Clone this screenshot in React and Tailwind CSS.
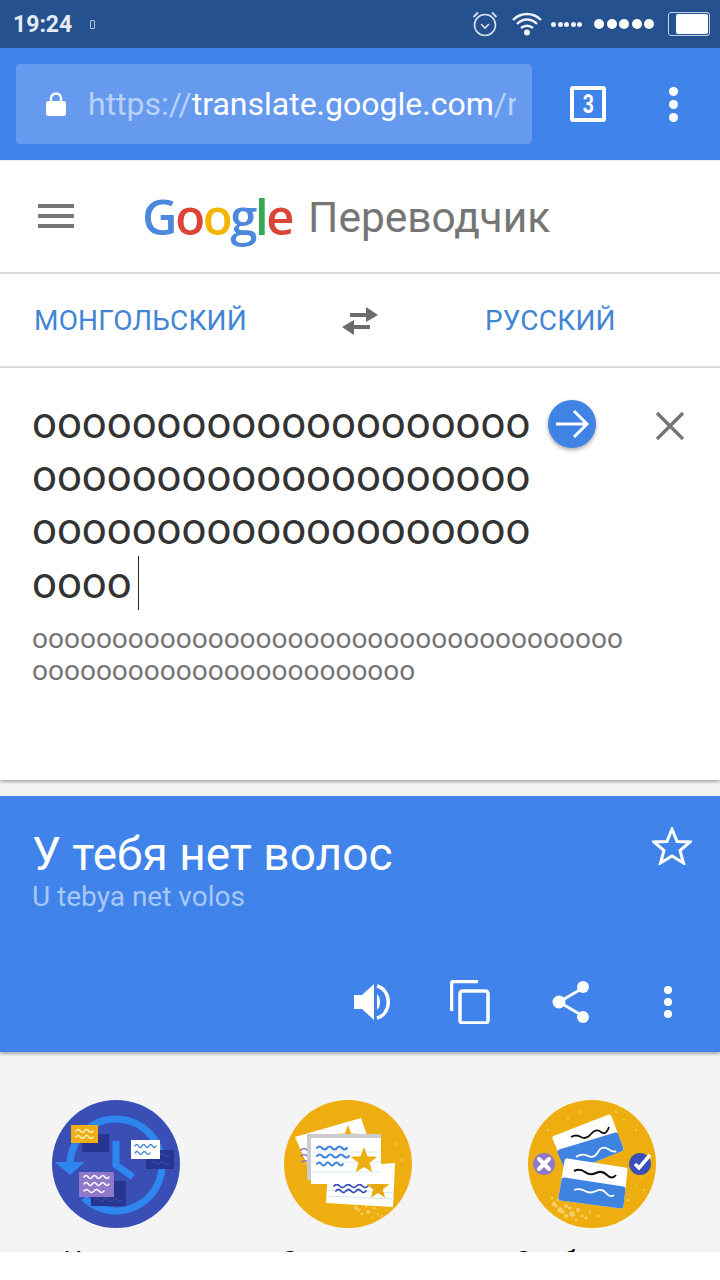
import React from "react";

const Squig = ({ x, y, w, c, sw = 2, n = 3 }) => {
  const s = w / n;
  let d = `M${x} ${y}`;
  for (let i = 0; i < n; i++) d += ` q${s / 4} -3 ${s / 2} 0 t${s / 2} 0`;
  return <path d={d} fill="none" stroke={c} strokeWidth={sw} strokeLinecap="round" />;
};

const Star = ({ cx, cy, r, fill }) => {
  const pts = [];
  for (let i = 0; i < 10; i++) {
    const rad = i % 2 ? r * 0.42 : r;
    const a = -Math.PI / 2 + (i * Math.PI) / 5;
    pts.push(`${(cx + rad * Math.cos(a)).toFixed(1)},${(cy + rad * Math.sin(a)).toFixed(1)}`);
  }
  return <polygon points={pts.join(" ")} fill={fill} />;
};

const Specks = ({ items, c = "#f6cf6a" }) => (
  <g fill={c}>
    {items.map(([x, y, r], i) => (
      <circle key={i} cx={x} cy={y} r={r} />
    ))}
  </g>
);

const bottomSpecks = [
  [26, 104, 2.4], [32, 110, 2.8], [38, 106, 2], [44, 114, 2.8], [50, 110, 2], [38, 116, 2], [58, 118, 1.6], [30, 100, 1.2],
  [24, 98, 1.2], [48, 120, 1.2], [62, 112, 1.2], [70, 116, 1.2], [100, 100, 1.2], [108, 86, 0.8], [114, 78, 0.8],
  [35, 112, 2], [42, 108, 1.8], [54, 116, 1.6], [28, 106, 1.6],
];

const IlluHistory = () => (
  <svg width="128" height="128" viewBox="0 0 128 128" className="block">
    <circle cx="64" cy="64" r="64" fill="#3a4fb5" />
    <path d="M18 64 A46 46 0 1 1 32 98" fill="none" stroke="#2f86ee" strokeWidth="7" />
    <polygon points="3,62 33,62 18,75" fill="#2f86ee" />
    <path d="M64 41 V65 L81 77" fill="none" stroke="#2f86ee" strokeWidth="7" />
    <rect x="30" y="34" width="27" height="18" fill="#26358f" />
    <rect x="19" y="25" width="27" height="18" fill="#f0ae14" />
    <Squig x={24} y={31} w={17} c="#fff3c8" sw={1.4} n={2} />
    <Squig x={24} y={37} w={17} c="#fff3c8" sw={1.4} n={2} />
    <rect x="94" y="50" width="28" height="19" fill="#26358f" />
    <Squig x={99} y={55} w={18} c="#3a4fb5" sw={1.2} n={2} />
    <Squig x={99} y={63} w={18} c="#3a4fb5" sw={1.2} n={2} />
    <rect x="79" y="40" width="29" height="19" fill="#ffffff" />
    <Squig x={83} y={46} w={21} c="#3f83d8" sw={1.4} n={3} />
    <Squig x={83} y={53} w={15} c="#3f83d8" sw={1.4} n={2} />
    <rect x="39" y="81" width="35" height="25" fill="#26358f" />
    <Squig x={43} y={100} w={27} c="#3a4fb5" sw={1.2} n={3} />
    <rect x="27" y="72" width="35" height="25" fill="#9079cb" />
    <Squig x={32} y={77} w={25} c="#ffffff" sw={1.5} n={3} />
    <Squig x={32} y={84} w={25} c="#ffffff" sw={1.5} n={3} />
    <Squig x={32} y={91} w={20} c="#ffffff" sw={1.5} n={2} />
  </svg>
);

const IlluSaved = () => (
  <svg width="128" height="128" viewBox="0 0 128 128" className="block">
    <circle cx="64" cy="64" r="64" fill="#efae0f" />
    <Specks items={[...bottomSpecks.map(([x, y, r]) => [x + 40, y - 2, r * 0.7]), [118, 60, 1], [112, 44, 1]]} />
    <polygon points="11,37 77,18 95,70 28,76" fill="#ffffff" />
    <Star cx={64} cy={38} r={13} fill="#efae0f" />
    <Squig x={17} y={50} w={12} c="#8a6cc8" sw={1.6} n={1} />
    <Squig x={17} y={56} w={12} c="#8a6cc8" sw={1.6} n={1} />
    <Squig x={18} y={62} w={11} c="#8a6cc8" sw={1.6} n={1} />
    <polygon points="44,68 111,63 109,107 42,103" fill="#ffffff" />
    <path d="M43 96 L110 99 M43 90 L110 93" stroke="#d4e6ec" strokeWidth="1" />
    <Squig x={50} y={86} w={34} c="#3a4fb5" sw={1.8} n={3} />
    <Squig x={52} y={91} w={30} c="#3a4fb5" sw={1.8} n={3} />
    <Star cx={94} cy={88} r={12} fill="#e8a80f" />
    <rect x="23" y="34" width="74" height="46" fill="#c9ccd0" />
    <rect x="27" y="38" width="70" height="46" fill="#ffffff" />
    <path d="M28 52 H97 M28 62 H97 M28 72 H97" stroke="#d9ecee" strokeWidth="1" />
    <Squig x={33} y={48} w={30} c="#3f83d8" sw={2} n={3} />
    <Squig x={33} y={56} w={32} c="#3f83d8" sw={2} n={3} />
    <Squig x={33} y={64} w={26} c="#3f83d8" sw={2} n={3} />
    <Star cx={80} cy={61} r={14} fill="#efae0f" />
  </svg>
);

const IlluCommunity = () => (
  <svg width="128" height="128" viewBox="0 0 128 128" className="block">
    <circle cx="64" cy="64" r="64" fill="#efae0f" />
    <Specks items={[...bottomSpecks, [40, 18, 1], [52, 12, 1], [96, 20, 1], [108, 30, 1], [116, 90, 1], [20, 30, 1], [88, 12, 1]]} />
    <polygon points="27,38 81,17 93,49 40,70" fill="#ffffff" stroke="#ffffff" strokeWidth="5" strokeLinejoin="round" />
    <polygon points="32,52 88,35 93,49 40,70" fill="#3f83e0" stroke="#3f83e0" strokeWidth="5" strokeLinejoin="round" />
    <path d="M43 37 q5 -3 10 0 t10 -3 t10 -2 t8 -5" fill="none" stroke="#111" strokeWidth="1.8" />
    <path d="M48 57 q6 -4 12 -1 t10 -4 t10 -3 t8 2" fill="none" stroke="#fff" strokeWidth="1.8" />
    <polygon points="39,61 97,70 93,106 33,98" fill="#ffffff" stroke="#ffffff" strokeWidth="5" strokeLinejoin="round" />
    <polygon points="36,80 95,89 93,106 33,98" fill="#3f83e0" stroke="#3f83e0" strokeWidth="5" strokeLinejoin="round" />
    <path d="M46 71 q6 -3 11 1 t11 1 t11 2 t9 0" fill="none" stroke="#111" strokeWidth="2" />
    <path d="M46 90 q6 -2 11 1 t11 0 t10 2 t8 2" fill="none" stroke="#fff" strokeWidth="1.8" />
    <circle cx="16" cy="64" r="11" fill="#9079cb" />
    <path d="M11 59 L21 69 M21 59 L11 69" stroke="#fff" strokeWidth="4" strokeLinecap="round" />
    <circle cx="112" cy="64" r="11" fill="#3a4fb5" />
    <path d="M107 64 L111 68 L122 55" fill="none" stroke="#fff" strokeWidth="3.5" />
  </svg>
);

const Feature = ({ label, children }) => (
  <div className="flex w-[128px] flex-col items-center">
    {children}
    <div className="mt-[12px] whitespace-nowrap text-[26.5px] leading-[40px] text-black">{label}</div>
  </div>
);

const oooo = "o".repeat(20);

export default function App() {
  return (
    <div className="flex h-[1280px] w-[720px] flex-col overflow-hidden bg-white font-['Roboto',sans-serif]">
      {/* status bar */}
      <div className="flex h-12 items-center justify-between bg-[#26518f] pl-[13px] pr-[10px]">
        <div className="flex items-center">
          <span className="text-[23px] font-bold leading-none text-[#e4ebf5]">19:24</span>
          <span className="ml-[18px] h-[9px] w-[5px] rounded-[1px] border border-[#b9c8de]" />
        </div>
        <div className="flex items-center">
          <svg width="26" height="28" viewBox="0 0 26 28" className="mr-[14px]">
            <circle cx="13" cy="15" r="10.5" fill="none" stroke="#d7e0ee" strokeWidth="1.6" />
            <path d="M9 14 l4 4 l4 -4" fill="none" stroke="#d7e0ee" strokeWidth="1.6" />
            <path d="M1.5 7 L6 2.5 M24.5 7 L20 2.5" stroke="#d7e0ee" strokeWidth="1.8" />
          </svg>
          <svg width="30" height="24" viewBox="0 0 30 24" className="mr-[9px]">
            <path d="M1 8 C9 0 21 0 29 8 M5 12 C11 6 19 6 25 12 M9 16 C12.5 13 17.5 13 21 16" fill="none" stroke="#eef3fa" strokeWidth="2.4" />
            <circle cx="15" cy="20.5" r="3" fill="#eef3fa" />
          </svg>
          <div className="mr-[12px] flex gap-[1.5px]">
            {[0, 1, 2, 3, 4].map((i) => (
              <span key={i} className="h-[5px] w-[5px] rounded-full bg-[#eef3fa]" />
            ))}
          </div>
          <div className="mr-[14px] flex gap-[2.5px]">
            {[0, 1, 2, 3, 4].map((i) => (
              <span key={i} className="h-[10px] w-[10px] rounded-full bg-white" />
            ))}
          </div>
          <div className="flex h-[24px] w-[42px] items-center justify-end rounded-[3px] border border-[#c4d2e6] p-px">
            <span className="h-full w-[32px] rounded-[2px] bg-white" />
          </div>
        </div>
      </div>

      {/* browser bar */}
      <div className="flex h-[112px] items-center bg-[#3f83eb] pl-4 pr-[36px]">
        <div className="flex h-[80px] w-[516px] items-center rounded-[4px] bg-[#669aef] pl-[30px]">
          <svg width="20" height="24" viewBox="0 0 20 24" className="shrink-0">
            <path d="M5 10 V6.5 a5 5 0 0 1 10 0 V10" fill="none" stroke="#fff" strokeWidth="2.4" />
            <rect x="0" y="9" width="20" height="15" rx="2.5" fill="#fff" />
          </svg>
          <div className="ml-[22px] w-[428px] overflow-hidden whitespace-nowrap text-[32px] leading-[40px] text-white">
            <span className="text-[#b8d1f8]">https://</span>translate.google.com<span className="text-[#b8d1f8]">/r</span>
          </div>
        </div>
        <div className="ml-[38px] flex h-[36px] w-[36px] items-center justify-center rounded-[3px] border-[4px] border-white text-white">
          <span className="scale-x-75 text-[26px] font-bold leading-none">3</span>
        </div>
        <div className="ml-[63px] flex flex-col gap-[4px]">
          <span className="h-[9px] w-[9px] rounded-full bg-white" />
          <span className="h-[9px] w-[9px] rounded-full bg-white" />
          <span className="h-[9px] w-[9px] rounded-full bg-white" />
        </div>
      </div>

      {/* app header */}
      <div className="flex h-[114px] items-center border-b-2 border-[#dcdcdc] pl-[38px] shadow-[inset_0_2px_1px_-1px_rgba(0,0,0,0.08)]">
        <div className="flex w-[36px] flex-col gap-[6px]">
          <span className="h-1 bg-[#757575]" />
          <span className="h-1 bg-[#757575]" />
          <span className="h-1 bg-[#757575]" />
        </div>
        <div className="ml-[68px] flex items-baseline font-['Open_Sans',sans-serif] text-[49px] font-semibold leading-[60px] tracking-[-2.4px]">
          <span className="text-[#4a89dc]">G</span>
          <span className="text-[#db4437]">o</span>
          <span className="text-[#f4b400]">o</span>
          <span className="text-[#4a89dc]">g</span>
          <span className="text-[#34a853]">l</span>
          <span className="text-[#db4437]">e</span>
        </div>
        <span className="ml-[16px] mt-[4px] text-[42.5px] leading-[48px] text-[#757575]">Переводчик</span>
      </div>

      {/* language row */}
      <div className="flex h-[94px] items-center border-b-2 border-[#dcdcdc] pl-[34px] pt-[2px] text-[28px] leading-[36px] tracking-[0.2px] text-[#4285d6]">
        <span className="w-[308px]">МОНГОЛЬСКИЙ</span>
        <svg width="36" height="28" viewBox="0 0 36 28" className="shrink-0">
          <path d="M24 0 L36 8 L24 15 V10 H8 V6 H24 Z" fill="#6b6b6b" />
          <path d="M12 13 L0 20 L12 28 V22 H28 V18 H12 Z" fill="#6b6b6b" />
        </svg>
        <span className="ml-[107px]">РУССКИЙ</span>
      </div>

      {/* input */}
      <div className="relative z-10 flex h-[412px] flex-col bg-white pl-[32px] shadow-[0_2px_3px_rgba(0,0,0,0.3)]">
        <div className="flex items-start">
          <div className="w-[496px] pt-[29px] text-[43.7px] leading-[53px] text-[#333333]">
            <div>{oooo}</div>
            <div>{oooo}</div>
            <div>{oooo}</div>
            <div className="flex items-center">
              oooo<span className="ml-[6px] h-[54px] w-px bg-[#222]" />
            </div>
          </div>
          <div className="ml-[20px] mt-[32px] flex h-[48px] w-[48px] shrink-0 items-center justify-center rounded-full bg-[#3f83e4] shadow-[0_2px_4px_rgba(0,0,0,0.35)]">
            <svg width="36" height="32" viewBox="0 0 36 32">
              <path d="M2 16 H32 M20 3 L33 16 L20 29" fill="none" stroke="#fff" strokeWidth="3" />
            </svg>
          </div>
          <svg width="30" height="30" viewBox="0 0 30 30" className="ml-[59px] mt-[43px] shrink-0">
            <path d="M2 2 L28 28 M28 2 L2 28" stroke="#757575" strokeWidth="3.4" />
          </svg>
        </div>
        <div className="mt-[13px] text-[28px] leading-[32px] text-[#757575]">
          <div>{"o".repeat(37)}</div>
          <div>{"o".repeat(24)}</div>
        </div>
      </div>

      <div className="flex flex-1 flex-col overflow-hidden bg-[#f4f4f4]">
        {/* result */}
        <div className="relative mt-[16px] flex h-[256px] shrink-0 flex-col bg-[#3f83eb] pl-[32px] pr-[28px] shadow-[0_2px_3px_rgba(0,0,0,0.3)]">
          <div className="flex justify-between">
            <div className="pt-[32px]">
              <div className="text-[46px] leading-[53px] text-white">У тебя нет волос</div>
              <div className="text-[28px] leading-[32px] text-[#a9c8f7]">U tebya net volos</div>
            </div>
            <svg width="40" height="38" viewBox="0 0 40 38" className="mt-[31px]">
              <polygon points="20,2 25,14.5 38,15 28,23.5 31.5,36 20,29 8.5,36 12,23.5 2,15 15,14.5" fill="none" stroke="#fff" strokeWidth="3" strokeLinejoin="miter" />
            </svg>
          </div>
          <div className="mt-[67px] flex items-center">
            <svg width="38" height="38" viewBox="0 0 38 38" className="ml-[322px]">
              <path d="M0 12 H8 L20 1 V37 L8 26 H0 Z" fill="#fff" />
              <path d="M23 11 C27 14 27 24 23 27 Z" fill="#fff" />
              <path d="M23 3 C38 7 38 31 23 35" fill="none" stroke="#fff" strokeWidth="3.5" />
            </svg>
            <svg width="40" height="44" viewBox="0 0 40 44" className="ml-[58px]">
              <path d="M1.5 31 V4 Q1.5 1.5 4 1.5 H28" fill="none" stroke="#fff" strokeWidth="3.5" />
              <rect x="10" y="11" width="28" height="32" rx="2.5" fill="none" stroke="#fff" strokeWidth="3.5" />
            </svg>
            <svg width="38" height="42" viewBox="0 0 38 42" className="ml-[62px]">
              <path d="M7 21 L31 7 M7 21 L31 35" stroke="#fff" strokeWidth="3" />
              <circle cx="31" cy="6" r="6" fill="#fff" />
              <circle cx="7" cy="21" r="6.5" fill="#fff" />
              <circle cx="31" cy="36" r="6" fill="#fff" />
            </svg>
            <div className="ml-[74px] flex flex-col gap-[4px]">
              <span className="h-2 w-2 rounded-full bg-white" />
              <span className="h-2 w-2 rounded-full bg-white" />
              <span className="h-2 w-2 rounded-full bg-white" />
            </div>
          </div>
        </div>

        {/* features */}
        <div className="flex h-[200px] shrink-0 overflow-hidden pt-[48px]">
          <div className="ml-[52px]">
            <Feature label="История"><IlluHistory /></Feature>
          </div>
          <div className="ml-[104px]">
            <Feature label="Сохранено"><IlluSaved /></Feature>
          </div>
          <div className="ml-[116px]">
            <Feature label="Сообщество"><IlluCommunity /></Feature>
          </div>
        </div>
        <div className="h-[28px] shrink-0 bg-white" />
      </div>
    </div>
  );
}
